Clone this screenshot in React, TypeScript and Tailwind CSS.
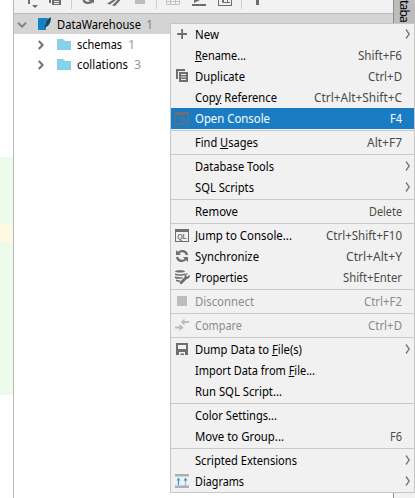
import { Fragment, useLayoutEffect, useRef, type ReactNode } from "react";

/** Text on one line, scaled horizontally so that it fills a given width. */
function Fit({ width, children, className = "" }: { width: number; children: ReactNode; className?: string }) {
  const ref = useRef<HTMLSpanElement>(null);
  useLayoutEffect(() => {
    const el = ref.current;
    if (!el) return;
    el.style.transform = "none";
    const natural = el.getBoundingClientRect().width;
    el.style.transform = `scaleX(${width / natural})`;
  }, [width]);
  return (
    <span className="block shrink-0" style={{ width }}>
      <span ref={ref} className={`inline-block origin-left whitespace-pre ${className}`}>
        {children}
      </span>
    </span>
  );
}

type IconName = "add" | "copy" | "ql" | "sync" | "props" | "stop" | "compare" | "save" | "diagram";

function Icon({ name }: { name: IconName }) {
  const c = "#6e6e6e";
  return (
    <svg width="16" height="16" viewBox="0 0 16 16" className="block" fill={c}>
      {name === "add" && <path d="M7.200 3h1.800v4.100h4v1.800H9V13H7.200V8.900h-4V7.100h4z" />}
      {name === "copy" && (
        <>
          <path d="M2 1h9v2H4v8H2z" />
          <path fillRule="evenodd" d="M5 4h9v10H5zM7 6v1h5V6zM7 8.500v1h5v-1zM7 11v1h5v-1z" />
        </>
      )}
      {name === "ql" && (
        <>
          <path fillRule="evenodd" d="M1 2h14v13H1zM2 5v9h12V5z" />
          <text x="8" y="12" textAnchor="middle" fontSize="7" fontWeight="700" fontFamily="Liberation Sans, sans-serif">
            QL
          </text>
        </>
      )}
      {name === "sync" && (
        <g fill="none" stroke={c} strokeWidth="2.300">
          <path d="M4 5.500A4.900 4.900 0 0 1 13 7" />
          <path d="M12 10.500A4.900 4.900 0 0 1 3 9" />
          <path d="M2 2v5h5zM14 14V9H9z" fill={c} stroke="none" />
        </g>
      )}
      {name === "props" && (
        <>
          <path d="M1 2.400C1 .9 11 .9 11 2.400S1 3.900 1 2.400zM1 4.300c2 1.300 8 1.300 10 0v1.500c-2 1.300-8 1.300-10 0zM1 7.300c2 1 5 1.200 8 .7L7.700 9.800C5 10 2 9.700 1 8.900zM2 10.600c1.200.6 3 .8 4.600.6l-1.400 1.700c-1.500-.1-3-.6-3.200-1.200z" />
          <path d="M15.600 5.700l-2.300 2.100-1.300-1.200 2-2.300c-2-.4-4 1.500-3.300 3.700L5.800 13c-.8 1.500 1 3 2.300 1.800l4.700-4.900c2 .3 3.700-2.200 2.800-4.200z" />
        </>
      )}
      {name === "stop" && <path d="M3 3h10v10H3z" fill="#bdbdbd" />}
      {name === "compare" && (
        <path d="M6.800 5L10.500 1.500V4H15v2h-4.500v2.500zM9.500 10.500L5.500 7v2.500H1v2h4.500V14z" fill="#bcbcbc" />
      )}
      {name === "save" && <path fillRule="evenodd" d="M2 2h12v12H2zM4 4v4h8V4zM5 11v3h1.500v-1.500H10V14h1v-3z" />}
      {name === "diagram" && (
        <>
          <path d="M1 1h14v2.500H1zM1 12.500h14V15H1z" fill="#a9b2b8" />
          <path d="M4.500 4.500l2 3H5.100v4.700H3.900V7.500H2.500zM11.500 4.500l2 3h-1.400v1.200h-1.200V7.500H9.500zM10.900 9.500h1.200v1h-1.200zM10.900 11.300h1.200v1h-1.200z" fill="#389fd6" />
        </>
      )}
    </svg>
  );
}

type Item = {
  label: ReactNode;
  w: number;
  keys?: string;
  kw?: number;
  icon?: IconName;
  arrow?: boolean;
  active?: boolean;
  disabled?: boolean;
};

const u = (s: string) => <span className="underline decoration-1 underline-offset-[1px]">{s}</span>;

const groups: Item[][] = [
  [
    { label: "New", w: 24, icon: "add", arrow: true },
    { label: <>{u("R")}ename...</>, w: 51, keys: "Shift+F6", kw: 44 },
    { label: "Duplicate", w: 50, icon: "copy", keys: "Ctrl+D", kw: 34 },
    { label: <>Cop{u("y")} Reference</>, w: 82, keys: "Ctrl+Alt+Shift+C", kw: 88 },
    { label: "Open Console", w: 75, icon: "ql", keys: "F4", kw: 12, active: true },
  ],
  [{ label: <>Find {u("U")}sages</>, w: 63, keys: "Alt+F7", kw: 35 }],
  [
    { label: "Database Tools", w: 79, arrow: true },
    { label: "SQL Scripts", w: 59, arrow: true },
  ],
  [{ label: "Remove", w: 43, keys: "Delete", kw: 33 }],
  [
    { label: "Jump to Console...", w: 97, icon: "ql", keys: "Ctrl+Shift+F10", kw: 76 },
    { label: "Synchronize", w: 64, icon: "sync", keys: "Ctrl+Alt+Y", kw: 56 },
    { label: "Properties", w: 53, icon: "props", keys: "Shift+Enter", kw: 59 },
  ],
  [{ label: "Disconnect", w: 59, icon: "stop", keys: "Ctrl+F2", kw: 38, disabled: true }],
  [{ label: "Compare", w: 47, icon: "compare", keys: "Ctrl+D", kw: 34, disabled: true }],
  [
    { label: <>Dump Data to {u("F")}ile(s)</>, w: 107, icon: "save", arrow: true },
    { label: <>Import Data from {u("F")}ile...</>, w: 120 },
    { label: "Run SQL Script...", w: 87 },
  ],
  [
    { label: "Color Settings...", w: 82 },
    { label: "Move to Group...", w: 89, keys: "F6", kw: 12 },
  ],
  [
    { label: "Scripted Extensions", w: 102, arrow: true },
    { label: "Diagrams", w: 49, icon: "diagram", arrow: true },
  ],
];

function Row({ item }: { item: Item }) {
  const tone = item.active ? "bg-[#1a7dc4] text-white" : item.disabled ? "text-[#8c8c8c]" : "text-black";
  const keyTone = item.active ? "text-white" : item.disabled ? "text-[#8c8c8c]" : "text-[#4b4b4b]";
  return (
    <div className={`flex h-[21px] items-center pl-[3px] ${tone}`}>
      <div className="mr-[5px] h-[17px] w-4 shrink-0">{item.icon && <Icon name={item.icon} />}</div>
      <Fit width={item.w}>{item.label}</Fit>
      <div className="flex-1" />
      {item.keys && (
        <div className="mr-3">
          <Fit width={item.kw!} className={keyTone}>{item.keys}</Fit>
        </div>
      )}
      {item.arrow && (
        <svg width="6" height="12" viewBox="0 0 6 12" className="mr-[3px] -mt-0.5 shrink-0" fill="none" stroke="#777" strokeWidth="1.300">
          <path d="M1 1.500L4.200 6L1 10.500" />
        </svg>
      )}
    </div>
  );
}

function Menu() {
  return (
    <div className="absolute top-[23px] left-[170px] w-[245px] border border-[#c6c6c6] bg-[#f1f1f1]">
      {groups.map((g, i) => (
        <Fragment key={i}>
          {i > 0 && <div className="my-px h-px bg-[#c9c9c9]" />}
          {g.map((item, j) => (
            <Row key={j} item={item} />
          ))}
        </Fragment>
      ))}
    </div>
  );
}

function Folder() {
  return (
    <svg width="14" height="12" viewBox="0 0 14 12" fill="#87d1ea">
      <path d="M0 1h6l2 2h6v9H0z" />
    </svg>
  );
}

function TreeRow({ label, w, count }: { label: string; w: number; count: string }) {
  return (
    <div className="flex h-5 items-center pl-6">
      <svg width="6" height="10" viewBox="0 0 6 10" className="mt-px mr-[13px]" fill="none" stroke="#737373" strokeWidth="2">
        <path d="M.8 1L4.600 5L.8 9" />
      </svg>
      <Folder />
      <div className="mt-0.5 ml-[6px] flex">
        <Fit width={w}>{label}</Fit>
        <span className="ml-[6px] text-[#999]">{count}</span>
      </div>
    </div>
  );
}

function Toolbar() {
  return (
    <div className="h-[14px] overflow-hidden border-b border-[#bcbcbc] bg-[#f2f2f2]">
      <svg width="379" height="13" viewBox="14 0 379 13" className="block" fill="#6e6e6e">
        <path d="M28 0h2v4h-2zM32 5h6l-3 3z" />
        <path fillRule="evenodd" d="M49 0h2v3h-2zM52 0h9v5h-9zM54 1v1h5V1zM54 3v1h5V3z" />
        <path d="M71 0h1v9h-1zM156 0h1v9h-1zM241 0h1v9h-1z" fill="#cdcdcd" />
        <path d="M83.500 0a5 4 0 0 0 9 1" fill="none" stroke="#6e6e6e" strokeWidth="2.300" />
        <path d="M88 0h6v3z" />
        <path d="M107 3.500l6-3.500h3l-6 4.500zM112 5.500l5.500-5.500h3l-5.500 6z" />
        <path d="M135 0h10v4h-10z" fill="#bdbdbd" />
        <path d="M166.500 0v4.500h13V0M170.500 0v4M175.500 0v4M166 1.500h14" fill="none" stroke="#c4c4c4" />
        <path d="M192 4h14v2h-14zM194 3V0h6z" />
        <path fillRule="evenodd" d="M218 0h14v6h-14zM219 0v5h12V0z" />
        <path d="M222 0h2v2h3V0h1v2h2v1h-7l-1-1z" />
        <path d="M256 0h3v5h-3z" />
      </svg>
    </div>
  );
}

export default function App() {
  return (
    <div className="relative flex h-[498px] w-[415px] overflow-hidden bg-white font-['Noto_Sans','Open_Sans',sans-serif] text-[12.5px] leading-[20px] text-black">
      <div className="w-[13px] shrink-0 pt-[157px]">
        <div className="h-[68px] bg-[#edfbed]" />
        <div className="h-[17px] bg-[#fff8e3]" />
        <div className="h-[153px] bg-[#edfbed]" />
      </div>
      <div className="w-[380px] shrink-0 border-l border-[#b9b9b9]">
        <Toolbar />
        <div className="flex h-5 items-center bg-[#d4d4d4] pl-[3px]">
          <svg width="10" height="6" viewBox="0 0 10 6" className="mt-px mr-[11px]" fill="none" stroke="#808080" strokeWidth="2">
            <path d="M1 .8L5 4.600L9 .8" />
          </svg>
          <svg width="14" height="14" viewBox="0 0 14 14">
            <path d="M0 1h10L7 7l1 6H0z" fill="#1382c9" />
            <path d="M13 .5C9 1 7.500 5 7 9l-1 4 2-3c3-1 5-5 5-9.500z" fill="#174863" />
          </svg>
          <div className="mt-0.5 ml-[5px] flex">
            <Fit width={84}>DataWarehouse</Fit>
            <span className="ml-[5px] text-[#888]">1</span>
          </div>
        </div>
        <TreeRow label="schemas" w={45} count="1" />
        <TreeRow label="collations" w={51} count="3" />
      </div>
      <div className="w-[22px] shrink-0 border-l border-[#8e8e8e] bg-[#f2f2f2]">
        <div className="flex h-[34px] items-start justify-center bg-[#bdbdbd] pr-0.5">
          <span className="text-[12px] leading-[20px] tracking-[-0.8px] [writing-mode:vertical-rl]">taba</span>
        </div>
      </div>
      <Menu />
    </div>
  );
}
